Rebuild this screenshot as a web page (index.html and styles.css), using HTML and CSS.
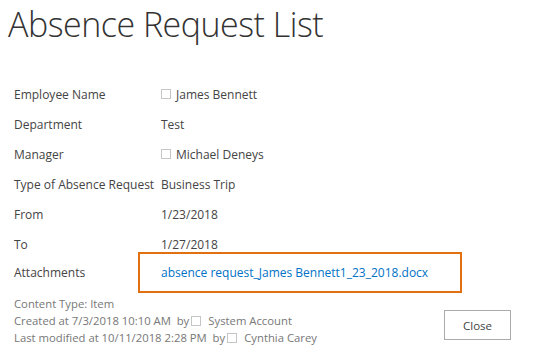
FILE: index.html
```html
<!DOCTYPE html>
<html lang="en">
  <head>
    <meta charset="UTF-8" />
    <title>Absence Request List</title>
    <link rel="stylesheet" href="styles.css">
  </head>
  <body>
    <h1 class="page-title">Absence Request List</h1>

    <div class="form">
      <div class="row">
        <div class="label">Employee Name</div>
        <div class="value"><span class="presence"></span>James Bennett</div>
      </div>
      <div class="row">
        <div class="label">Department</div>
        <div class="value">Test</div>
      </div>
      <div class="row">
        <div class="label">Manager</div>
        <div class="value"><span class="presence"></span>Michael Deneys</div>
      </div>
      <div class="row">
        <div class="label">Type of Absence Request</div>
        <div class="value">Business Trip</div>
      </div>
      <div class="row">
        <div class="label">From</div>
        <div class="value">1/23/2018</div>
      </div>
      <div class="row">
        <div class="label">To</div>
        <div class="value">1/27/2018</div>
      </div>
      <div class="row attach-row">
        <div class="label">Attachments</div>
        <div class="attach-box">
          <a href="#" class="attach-link">absence request_James Bennett1_23_2018.docx</a>
        </div>
      </div>
    </div>

    <div class="footer">
      <div class="meta">
        <div>Content Type: Item</div>
        <div>Created at 7/3/2018 10:10 AM&nbsp; by<span class="presence small"></span>System Account</div>
        <div>Last modified at 10/11/2018 2:28 PM&nbsp; by<span class="presence small"></span>Cynthia Carey</div>
      </div>
      <button class="close-btn">Close</button>
    </div>
  </body>
</html>
```

FILE: styles.css
```css
* {
  box-sizing: border-box;
}

body {
  margin: 0;
  padding: 0 0 0 8px;
  background: #fff;
  color: #444;
  font-family: "Open Sans", "Noto Sans", sans-serif;
  font-size: 12px;
}

.page-title {
  margin: 0;
  padding-top: 1px;
  font-weight: 300;
  font-size: 34px;
  line-height: 46px;
  color: #333;
  letter-spacing: -0.5px;
}

/* ───── FORM ───── */
.form {
  margin-top: 32px;
  padding-left: 6px;
}

.row {
  display: flex;
  align-items: center;
  height: 30px;
}

.label {
  width: 147px;
  white-space: nowrap;
}

.value {
  display: flex;
  align-items: center;
}

.presence {
  display: inline-block;
  width: 10px;
  height: 10px;
  border: 1px solid #c6c6c6;
  margin-right: 5px;
}
.presence.small {
  margin: 0 7px 0 2px;
  vertical-align: -1px;
}

.row.attach-row {
  height: 41px;
  margin-top: -7px;
}

.attach-box {
  margin-left: -23px;
  width: 324px;
  height: 41px;
  border: 2px solid #e07010;
  display: flex;
  align-items: center;
  padding-left: 21px;
}

.attach-link {
  color: #0072c6;
  text-decoration: none;
}

/* ───── FOOTER ───── */
.footer {
  display: flex;
  align-items: flex-end;
  padding-left: 6px;
  margin-top: 2px;
}

.meta {
  color: #777;
  font-size: 11.3px;
  line-height: 17px;
  width: 430px;
}

.close-btn {
  width: 67px;
  height: 30px;
  margin-bottom: 6px;
  background: #fff;
  border: 1px solid #ababab;
  color: #444;
  font-family: inherit;
  font-size: 11.5px;
}
```
